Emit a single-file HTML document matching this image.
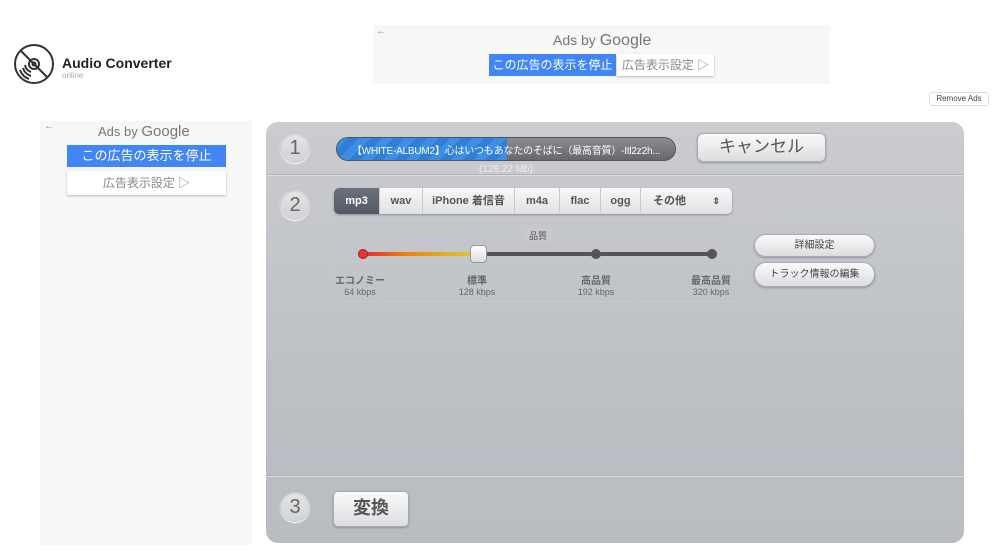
<!DOCTYPE html>
<html><head><meta charset="utf-8"><style>
*{box-sizing:border-box;margin:0;padding:0}
body{width:1000px;height:557px;background:#fff;font-family:"Liberation Sans","Noto Sans CJK JP",sans-serif;position:relative;overflow:hidden}
.a{position:absolute}
.ad{background:#f7f7f8}
.gb{background:#4285f4;color:#fff;font-size:12px;text-align:center;white-space:nowrap}
.wb{background:#fff;color:#888;font-size:12px;text-align:center;box-shadow:0 1px 2px rgba(0,0,0,.25);white-space:nowrap}
.circ{width:30px;height:30px;border-radius:50%;background:linear-gradient(#e4e5e7,#d0d2d5);box-shadow:0 1px 1px #fff,inset 0 1px 2px rgba(0,0,0,.15);color:#666;font-size:20px;text-align:center;line-height:30px}
.btn{background:linear-gradient(#fafafa,#dcdde0);border:1px solid #a8abb0;box-shadow:0 1px 2px rgba(0,0,0,.25);color:#444;text-align:center}
.tab{position:absolute;top:0;height:26px;line-height:26px;font-size:11px;font-weight:bold;color:#555;text-align:center;border-right:1px solid #c8cacd}
.lab{position:absolute;text-align:center;font-size:9px;color:#666;width:80px}
.lab b{display:block;font-size:10px;color:#666}
</style></head><body>
<svg class="a" style="left:13px;top:43px" width="42" height="42" viewBox="0 0 42 42" fill="none" stroke="#333" stroke-width="2"><circle cx="21" cy="21" r="19"/><circle cx="21" cy="21" r="5"/><circle cx="21" cy="21" r="1.5" fill="#333"/><path d="M8 8L34 34"/><path d="M10 25a12 12 0 0 0 8 8M7 27a15 15 0 0 0 9 9M12 22a9 9 0 0 0 6 7"/></svg>
<div class="a" style="left:62px;top:55px;font-size:14px;font-weight:bold;color:#222">Audio Converter</div>
<div class="a" style="left:62px;top:71px;font-size:8px;color:#aaa">online</div>
<div class="a ad" style="left:373px;top:25px;width:457px;height:59px"></div>
<div class="a" style="left:376px;top:26px;font-size:10px;color:#999">←</div>
<div class="a" style="left:553px;top:32px;font-size:14px;color:#777">Ads by <span style="font-size:16px">Google</span></div>
<div class="a gb" style="left:489px;top:54px;width:127px;height:22px;line-height:22px">この広告の表示を停止</div>
<div class="a wb" style="left:617px;top:54px;width:97px;height:22px;line-height:22px">広告表示設定 ▷</div>
<div class="a" style="left:929px;top:92px;width:60px;height:14px;border:1px solid #ddd;border-radius:3px;font-size:8px;color:#444;text-align:center;line-height:12px">Remove Ads</div>
<div class="a ad" style="left:40px;top:121px;width:212px;height:424px"></div>
<div class="a" style="left:44px;top:121px;font-size:10px;color:#999">←</div>
<div class="a" style="left:98px;top:123px;font-size:13px;color:#777">Ads by <span style="font-size:15px">Google</span></div>
<div class="a gb" style="left:67px;top:145px;width:159px;height:22px;line-height:22px;font-size:13px">この広告の表示を停止</div>
<div class="a wb" style="left:67px;top:171px;width:159px;height:24px;line-height:24px">広告表示設定 ▷</div>
<div class="a" style="left:266px;top:122px;width:698px;height:421px;border-radius:12px;background:linear-gradient(#cbccd0,#bcc0c5 60%,#b9bdc2);overflow:hidden">
 <div class="a" style="left:0;top:52px;width:698px;height:1px;background:#aeb1b6;box-shadow:0 1px 0 #dcdde0"></div>
 <div class="a" style="left:0;top:353px;width:698px;height:1px;background:#aeb1b6;box-shadow:0 1px 0 #dcdde0"></div>
</div>
<div class="a circ" style="left:280px;top:133px">1</div>
<div class="a circ" style="left:280px;top:190px">2</div>
<div class="a circ" style="left:280px;top:492px">3</div>
<div class="a" style="left:336px;top:137px;width:340px;height:24px;border-radius:12px;background:linear-gradient(#8a8c90,#66686c);border:1px solid #555;overflow:hidden">
 <div style="width:170px;height:100%;background:repeating-linear-gradient(135deg,#3d8ee6 0 8px,#2f7fd9 8px 16px)"></div>
</div>
<div class="a" style="left:336px;top:142px;width:340px;text-align:center;font-size:10px;color:#fff;white-space:nowrap;letter-spacing:-.2px">【WHITE-ALBUM2】心はいつもあなたのそばに（最高音質）-Itl2z2h...</div>
<div class="a" style="left:336px;top:164px;width:340px;text-align:center;font-size:10px;color:#eee">(128.22 Mb)</div>
<div class="a btn" style="left:697px;top:133px;width:129px;height:29px;border-radius:6px;font-size:17px;line-height:26px;color:#555">キャンセル</div>
<div class="a" style="left:334px;top:188px;width:398px;height:26px;border-radius:5px;background:linear-gradient(#f8f8f9,#e0e1e4);box-shadow:0 1px 2px rgba(0,0,0,.3);overflow:hidden">
 <div class="tab" style="left:0;width:46px;background:linear-gradient(#6a717c,#535a64);color:#fff">mp3</div>
 <div class="tab" style="left:46px;width:43px">wav</div>
 <div class="tab" style="left:89px;width:92px">iPhone 着信音</div>
 <div class="tab" style="left:181px;width:45px">m4a</div>
 <div class="tab" style="left:226px;width:41px">flac</div>
 <div class="tab" style="left:267px;width:40px">ogg</div>
 <div class="tab" style="left:307px;width:91px;border:0;text-align:left;padding-left:12px">その他<span style="position:absolute;right:12px;font-size:9px">⇕</span></div>
</div>
<div class="a" style="left:334px;top:234px;width:407px;height:68px;border:1px solid #c6c8cc;border-radius:5px"></div>
<div class="a" style="left:523px;top:229px;width:30px;text-align:center;font-size:9px;color:#555;background:#c7c9cd">品質</div>
<div class="a" style="left:363px;top:252px;width:350px;height:4px;background:#555;border-radius:2px"></div>
<div class="a" style="left:363px;top:252px;width:115px;height:4px;background:linear-gradient(90deg,#e23,#e80 40%,#dc3);border-radius:2px"></div>
<div class="a" style="left:358px;top:249px;width:10px;height:10px;border-radius:50%;background:#e33;border:1px solid #922"></div>
<div class="a" style="left:591px;top:249px;width:10px;height:10px;border-radius:50%;background:#555"></div>
<div class="a" style="left:707px;top:249px;width:10px;height:10px;border-radius:50%;background:#555"></div>
<div class="a" style="left:470px;top:245px;width:17px;height:18px;border-radius:4px;background:linear-gradient(#fff,#ddd);border:1px solid #999"></div>
<div class="lab" style="left:320px;top:272px"><b>エコノミー</b>64 kbps</div>
<div class="lab" style="left:437px;top:272px"><b>標準</b>128 kbps</div>
<div class="lab" style="left:556px;top:272px"><b>高品質</b>192 kbps</div>
<div class="lab" style="left:671px;top:272px"><b>最高品質</b>320 kbps</div>
<div class="a btn" style="left:754px;top:234px;width:121px;height:23px;border-radius:12px;font-size:10px;line-height:21px">詳細設定</div>
<div class="a btn" style="left:754px;top:262px;width:121px;height:25px;border-radius:12px;font-size:10px;line-height:23px">トラック情報の編集</div>
<div class="a btn" style="left:333px;top:491px;width:76px;height:36px;border-radius:5px;font-size:18px;line-height:33px;font-weight:bold;color:#555">変換</div>
</body></html>
